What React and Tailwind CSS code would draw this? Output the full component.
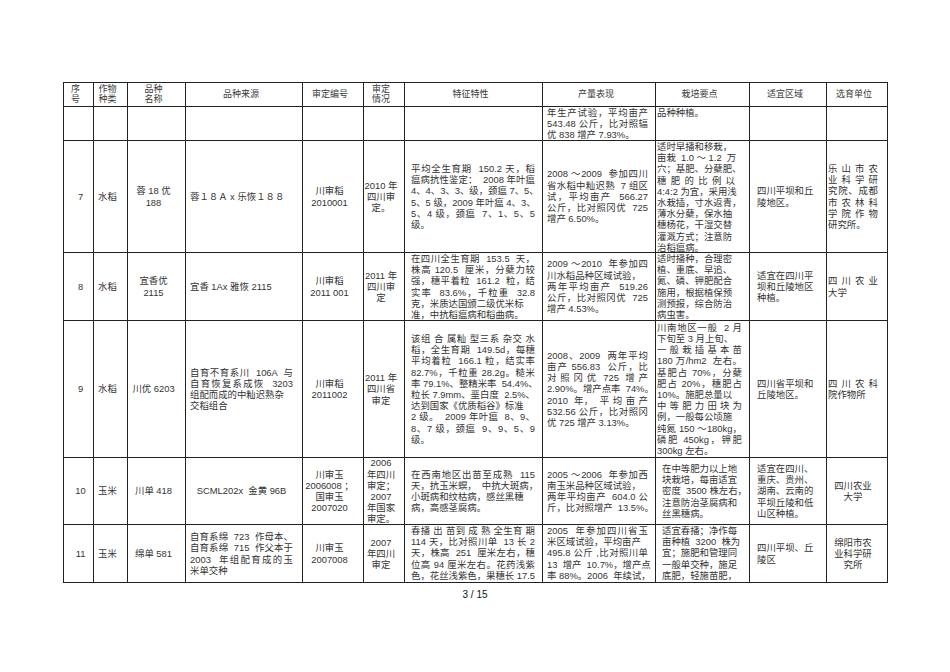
import React from "react";

const COLS = [
  { box: "pl-[4px] justify-center", inner: "text-center" },
  { box: "pl-[4px] justify-start", inner: "text-left" },
  { box: "pr-[6px] justify-center", inner: "text-center" },
  { box: "pl-[4px] justify-start", inner: "w-[103px] text-left" },
  { box: "pl-[1px] pr-[8px] justify-center", inner: "text-center" },
  { box: "pr-[6px] justify-center", inner: "text-center" },
  { box: "pl-[6px] justify-start", inner: "w-[124px] text-left" },
  { box: "pl-[4px] justify-start", inner: "w-[101px] text-left" },
  { box: "pl-[1px] justify-start", inner: "w-[78px] text-left" },
  { box: "pl-[7px] justify-start", inner: "text-left" },
  { box: "pl-[1px] pr-[9px] justify-start", inner: "w-[50px] text-left" },
];

const HEADER = [
  ["序", "号"],
  ["作物", "种类"],
  ["品种", "名称"],
  ["品种来源"],
  ["审定编号"],
  ["审定", "情况"],
  ["特征特性"],
  ["产量表现"],
  ["栽培要点"],
  ["适宜区域"],
  ["选育单位"],
];

// "|" prefix = justified line
const ROWS = [
  [
    {}, {}, {}, {}, {}, {},
    {},
    { v: "t", lines: ["|年生产试验，平均亩产", "|543.48 公斤，比对照辐", "优 838 增产 7.93%。"] },
    { v: "t", lines: ["品种种植。"] },
    {}, {},
  ],
  [
    { lines: ["7"] },
    { lines: ["水稻"] },
    { lines: ["蓉 18 优", "188"] },
    { lines: ["蓉１８Ａ x 乐恢１８８"] },
    { lines: ["川审稻", "2010001"] },
    { lines: ["2010 年", "四川审", "定。"] },
    {
      lines: [
        "|平均全生育期  150.2 天，稻",
        "|瘟病抗性鉴定：  2008 年叶瘟",
        "|4、4、3、3、级，颈瘟 7、5、",
        "|5、5 级，2009 年叶瘟 4、3、",
        "|5、4 级，颈瘟  7、1、5、5",
        "级。",
      ],
    },
    {
      lines: [
        "|2008 ～2009  参加四川",
        "|省水稻中籼迟熟  7 组区",
        "|试，平均亩产    566.27",
        "|公斤，比对照冈优  725",
        "增产 6.50%。",
      ],
    },
    {
      v: "t",
      lines: [
        "适时早播和移栽，",
        "|亩栽  1.0 ～ 1.2  万",
        "穴；基肥、分蘖肥、",
        "|穗 肥 的 比 例 以",
        "4:4:2 为宜，采用浅",
        "水栽插，寸水返青，",
        "薄水分蘖，保水抽",
        "穗杨花，干湿交替",
        "灌溉方式；注意防",
        "治稻瘟病。",
      ],
    },
    { lines: ["四川平坝和丘", "陵地区。"] },
    { lines: ["|乐 山 市 农", "|业 科 学 研", "|究院、成都", "|市 农 林 科", "|学 院 作 物", "研究所。"] },
  ],
  [
    { lines: ["8"] },
    { lines: ["水稻"] },
    { lines: ["宜香优", "2115"] },
    { lines: ["宜香 1Ax 雅恢 2115"] },
    { lines: ["川审稻", "2011 001"] },
    { lines: ["2011 年", "四川审", "定"] },
    {
      v: "t",
      lines: [
        "|在四川全生育期  153.5  天，",
        "|株高 120.5  厘米，分蘖力较",
        "|强，穗平着粒  161.2  粒，结",
        "|实率  83.6%，千粒重  32.8",
        "克，米质达国颁二级优米标",
        "准，中抗稻瘟病和稻曲病。",
      ],
    },
    {
      lines: [
        "|2009 ～2010  年参加四",
        "川水稻品种区域试验，",
        "|两年平均亩产    519.26",
        "|公斤，比对照冈优  725",
        "增产 4.53%。",
      ],
    },
    {
      v: "t",
      lines: ["适时播种，合理密", "植、重底、早追、", "氮、磷、钾肥配合", "施用，根据植保预", "测预报，综合防治", "病虫害。"],
    },
    { lines: ["适宜在四川平", "坝和丘陵地区", "种植。"] },
    { lines: ["|四 川 农 业", "大学"] },
  ],
  [
    { lines: ["9"] },
    { lines: ["水稻"] },
    { lines: ["川优 6203"] },
    { lines: ["|自育不育系川  106A  与", "|自育恢复系成恢    3203", "组配而成的中籼迟熟杂", "交稻组合"] },
    { lines: ["川审稻", "2011002"] },
    { lines: ["2011 年", "四川省", "审定"] },
    {
      lines: [
        "|该组 合 属籼 型三系 杂交 水",
        "|稻，全生育期  149.5d，每穗",
        "|平均着粒  166.1 粒，结实率",
        "|82.7%，千粒重 28.2g。糙米",
        "|率 79.1%、整精米率  54.4%、",
        "|粒长 7.9mm、垩白度  2.5%、",
        "达到国家《优质稻谷》标准",
        "|2 级。  2009 年叶瘟  8、9、",
        "|8、7 级，颈瘟  9、9、5、9",
        "级。",
      ],
    },
    {
      lines: [
        "|2008、2009  两年平均",
        "|亩产 556.83  公斤，比",
        "|对 照 冈 优  725  增 产",
        "|2.90%。增产点率  74%。",
        "|2010  年，  平 均 亩 产",
        "|532.56 公斤，比对照冈",
        "优 725 增产 3.13%。",
      ],
    },
    {
      inner: "w-[85px] text-left",
      lines: [
        "|川南地区一般  2 月",
        "下旬至 3 月上旬、",
        "|一 般 栽 插 基 本 苗",
        "|180 万/hm2  左右。",
        "|基肥占 70%，分蘖",
        "|肥占 20%，穗肥占",
        "10%。施肥总量以",
        "|中 等 肥 力 田 块 为",
        "例，一般每公顷施",
        "|纯氮 150 ～180kg，",
        "|磷肥 450kg，钾肥",
        "300kg 左右。",
      ],
    },
    { lines: ["四川省平坝和", "丘陵地区。"] },
    { lines: ["|四 川 农 科", "院作物所"] },
  ],
  [
    { lines: ["10"] },
    { lines: ["玉米"] },
    { lines: ["川单 418"] },
    { inner: "w-[103px] text-center", lines: ["SCML202x  金黄 96B"] },
    { lines: ["川审玉", "2006008 ；", "国审玉", "2007020"] },
    { lines: ["2006", "年四川", "审定；", "2007", "年国家", "审定。"] },
    {
      lines: [
        "|在西南地区出苗至成熟    115",
        "|天，抗玉米螟，  中抗大斑病，",
        "小斑病和纹枯病，感丝黑穗",
        "病，高感茎腐病。",
      ],
    },
    {
      lines: [
        "|2005 ～2006  年参加西",
        "南玉米品种区域试验，",
        "|两年平均亩产  604.0 公",
        "|斤，比对照增产  13.5%。",
      ],
    },
    {
      box: "pl-[6px] justify-start",
      inner: "w-[76px] text-left",
      lines: ["在中等肥力以上地", "块栽培，每亩适宜", "密度  3500 株左右，", "注意防治茎腐病和", "丝黑穗病。"],
    },
    { lines: ["适宜在四川、", "重庆、贵州、", "湖南、云南的", "平坝丘陵和低", "山区种植。"] },
    { inner: "w-[50px] text-center", lines: ["四川农业", "大学"] },
  ],
  [
    { lines: ["11"] },
    { lines: ["玉米"] },
    { lines: ["绵单 581"] },
    { lines: ["|自育系绵  723  作母本、", "|自育系绵  715  作父本于", "|2003   年组配育成的玉", "米单交种"] },
    { lines: ["川审玉", "2007008"] },
    { lines: ["2007", "年四川", "审定"] },
    {
      v: "t",
      lines: [
        "|春播 出 苗到 成 熟 全生育 期",
        "|114 天，比对照川单  13 长 2",
        "|天，株高  251  厘米左右，穗",
        "|位高 94 厘米左右。花药浅紫",
        "|色，花丝浅紫色，果穗长 17.5",
      ],
    },
    {
      v: "t",
      lines: [
        "|2005  年参加四川省玉",
        "米区域试验，平均亩产",
        "|495.8 公斤 ,比对照川单",
        "|13  增产  10.7%，增产点",
        "|率 88%。2006  年续试，",
      ],
    },
    {
      v: "t",
      box: "pl-[6px] justify-start",
      inner: "w-[78px] text-left",
      lines: ["适宜春播；净作每", "|亩种植  3200  株为", "宜；施肥和管理同", "一般单交种，施足", "底肥，轻施苗肥，"],
    },
    { lines: ["四川平坝、丘", "陵区"] },
    { inner: "w-[50px] text-center", lines: ["绵阳市农", "业科学研", "究所"] },
  ],
];

function Line({ text }) {
  const j = text.startsWith("|");
  const t = j ? text.slice(1) : text;
  return (
    <div className={j ? "whitespace-pre text-justify [text-align-last:justify]" : "whitespace-pre"}>
      {t.replace(/ {2,}/g, "  ")}
    </div>
  );
}

function BodyCell({ cell, ci }) {
  const col = COLS[ci];
  const box = cell.box || col.box;
  const inner = cell.inner || col.inner;
  const v = cell.v === "t" ? "items-start" : "items-center";
  return (
    <div className={`flex overflow-hidden border-r border-b border-[#222] ${v} ${box}`}>
      {cell.lines ? (
        <div className={inner}>
          {cell.lines.map((l, i) => (
            <Line key={i} text={l} />
          ))}
        </div>
      ) : null}
    </div>
  );
}

export default function App() {
  return (
    <div className="w-[950px] h-[672px] bg-white overflow-hidden pt-[82px] pl-[63px] text-[#333] font-['Liberation_Sans','Noto_Sans_CJK_SC',sans-serif]">
      <div className="grid w-fit grid-cols-[30px_34px_58px_117px_61px_41px_138px_113px_94px_77px_61px] grid-rows-[24px_34px_112px_68px_137px_67px_58px] border-l border-t border-[#222] text-[9.4px] leading-[11.2px]">
        {HEADER.map((h, i) => (
          <div
            key={"h" + i}
            className="flex items-center justify-center pr-[6px] border-r border-b border-[#222] text-[9px] leading-[9.5px] text-[#3a3a3a]"
          >
            <div className="text-center">
              {h.map((t, k) => (
                <div key={k} className="whitespace-nowrap">
                  {t}
                </div>
              ))}
            </div>
          </div>
        ))}
        {ROWS.map((row, ri) =>
          row.map((cell, ci) => <BodyCell key={ri + "-" + ci} cell={cell} ci={ci} />)
        )}
      </div>
      <div className="w-[824px] mt-[6px] text-center text-[10px] leading-[12px] text-[#111]">3 / 15</div>
    </div>
  );
}
